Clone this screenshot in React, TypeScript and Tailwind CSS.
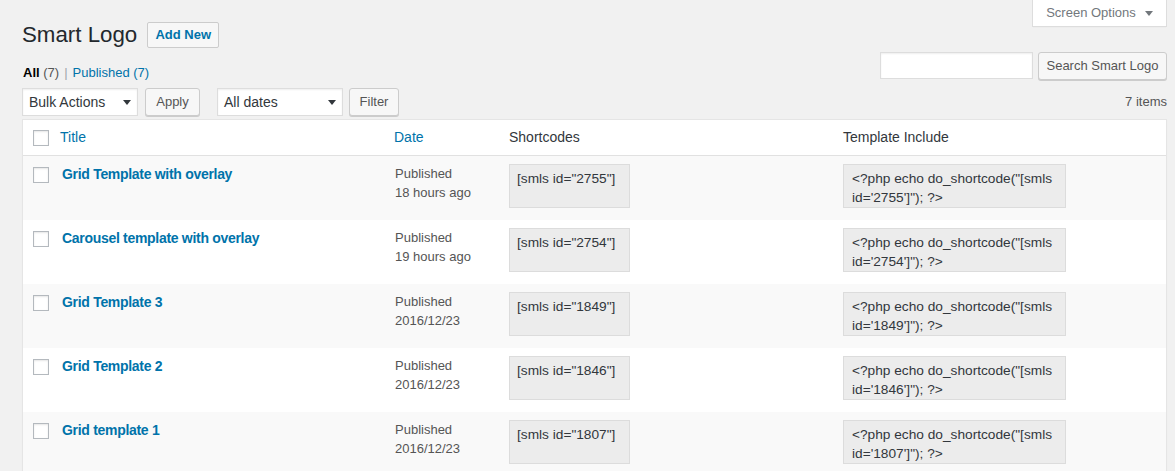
import React from "react";

const rows = [
  { title: "Grid Template with overlay", date: "18 hours ago", id: "2755" },
  { title: "Carousel template with overlay", date: "19 hours ago", id: "2754" },
  { title: "Grid Template 3", date: "2016/12/23", id: "1849" },
  { title: "Grid Template 2", date: "2016/12/23", id: "1846" },
  { title: "Grid template 1", date: "2016/12/23", id: "1807" },
];

function Arrow({ color = "#32373c" }: { color?: string }) {
  return (
    <svg width="8" height="5" viewBox="0 0 8 5" className="shrink-0">
      <polygon points="0,0 8,0 4,5" fill={color} />
    </svg>
  );
}

function Checkbox() {
  return (
    <div className="w-4 h-4 border border-[#b4b9be] bg-white shadow-[inset_0_1px_2px_rgba(0,0,0,0.1)]" />
  );
}

function Select({ label, width }: { label: string; width: string }) {
  return (
    <div
      className={`${width} h-[28px] bg-white border border-[#ddd] shadow-[inset_0_1px_2px_rgba(0,0,0,0.07)] flex items-center justify-between pl-[6px] pr-[6px] text-[14px] text-[#32373c]`}
    >
      <span>{label}</span>
      <Arrow />
    </div>
  );
}

function Button({ label, width }: { label: string; width: string }) {
  return (
    <div
      className={`${width} h-[28px] bg-[#f7f7f7] border border-[#ccc] rounded-[3px] shadow-[0_1px_0_#ccc] flex items-center justify-center text-[13px] text-[#555]`}
    >
      {label}
    </div>
  );
}

export default function App() {
  return (
    <div className="w-[1175px] h-[471px] overflow-hidden bg-[#f1f1f1] pl-[22px] pr-[8px] font-['Liberation_Sans',Arial,sans-serif] text-[13px] text-[#444]">
      {/* Title row */}
      <div className="flex items-start justify-between h-[46px]">
        <div className="flex items-center pt-[20px] gap-[10px]">
          <h1 className="text-[22.3px] leading-[29px] text-[#23282d] font-normal">Smart Logo</h1>
          <div className="h-[26px] w-[72px] flex items-center justify-center bg-[#f7f7f7] border border-[#ccc] rounded-[2px] text-[13px] font-semibold text-[#0073aa]">
            Add New
          </div>
        </div>
        <div className="w-[135px] h-[27px] bg-white border-x border-b border-[#ddd] shadow-[0_1px_1px_-1px_rgba(0,0,0,0.1)] flex items-center justify-center gap-[9px] text-[13px] text-[#72777c]">
          <span>Screen Options</span>
          <Arrow color="#72777c" />
        </div>
      </div>

      {/* Subsubsub + search */}
      <div className="flex items-start justify-between mt-[6px]">
        <div className="pt-[10px] leading-[21px] text-[13px] pl-[1px]">
          <span className="text-black font-semibold">All</span>{" "}
          <span className="text-[#555]">(7)</span>
          <span className="text-[#a0a5aa] mx-[5px]">|</span>
          <span className="text-[#0073aa]">Published (7)</span>
        </div>
        <div className="flex items-start gap-[5px]">
          <div className="w-[153px] h-[27px] bg-white border border-[#ddd] shadow-[inset_0_1px_2px_rgba(0,0,0,0.07)]" />
          <Button label="Search Smart Logo" width="w-[129px]" />
        </div>
      </div>

      {/* Tablenav */}
      <div className="flex items-center justify-between mt-[5px] h-[28px]">
        <div className="flex items-center">
          <Select label="Bulk Actions" width="w-[116px]" />
          <div className="ml-[7px]">
            <Button label="Apply" width="w-[55px]" />
          </div>
          <div className="ml-[17px]">
            <Select label="All dates" width="w-[126px]" />
          </div>
          <div className="ml-[6px]">
            <Button label="Filter" width="w-[50px]" />
          </div>
        </div>
        <div className="text-[13px] text-[#555] leading-[28px]">7 items</div>
      </div>

      {/* Table */}
      <div className="mt-[3px] bg-white border border-[#e5e5e5] shadow-[0_1px_1px_rgba(0,0,0,0.04)]">
        <div className="grid grid-cols-[29px_334px_115px_334px_1fr] h-[36px] items-center border-b border-[#e1e1e1] text-[14px]">
          <div className="pl-[10px]">
            <Checkbox />
          </div>
          <div className="pl-[8px] text-[#0073aa]">Title</div>
          <div className="pl-[8px] text-[#0073aa]">Date</div>
          <div className="pl-[8px] text-[#32373c]">Shortcodes</div>
          <div className="pl-[8px] text-[#32373c]">Template Include</div>
        </div>
        {rows.map((r, i) => (
          <div
            key={r.id}
            className={`grid grid-cols-[29px_334px_115px_334px_1fr] h-[64px] items-start ${
              i % 2 === 0 ? "bg-[#f9f9f9]" : "bg-white"
            }`}
          >
            <div className="pl-[10px] pt-[11px]">
              <Checkbox />
            </div>
            <div className="pl-[10px] pt-[8px] leading-[20px] text-[14px] font-bold tracking-[-0.3px] text-[#0073aa]">
              {r.title}
            </div>
            <div className="pl-[9px] pt-[8px] leading-[19px] text-[13px] text-[#555]">
              <div>Published</div>
              <div>{r.date}</div>
            </div>
            <div className="pl-[8px] pt-[8px]">
              <div className="w-[121px] h-[44px] bg-[#ececec] border border-[#dcdcdc] pl-[7px] pt-[4px] leading-[19px] text-[13.7px] text-[#32373c]">
                [smls id="{r.id}"]
              </div>
            </div>
            <div className="pl-[8px] pt-[8px]">
              <div className="w-[223px] h-[44px] bg-[#ececec] border border-[#dcdcdc] pl-[8px] pr-[4px] pt-[4px] leading-[19px] text-[13.7px] text-[#32373c]">
                {`<?php echo do_shortcode("[smls id='${r.id}']"); ?>`}
              </div>
            </div>
          </div>
        ))}
      </div>
    </div>
  );
}
